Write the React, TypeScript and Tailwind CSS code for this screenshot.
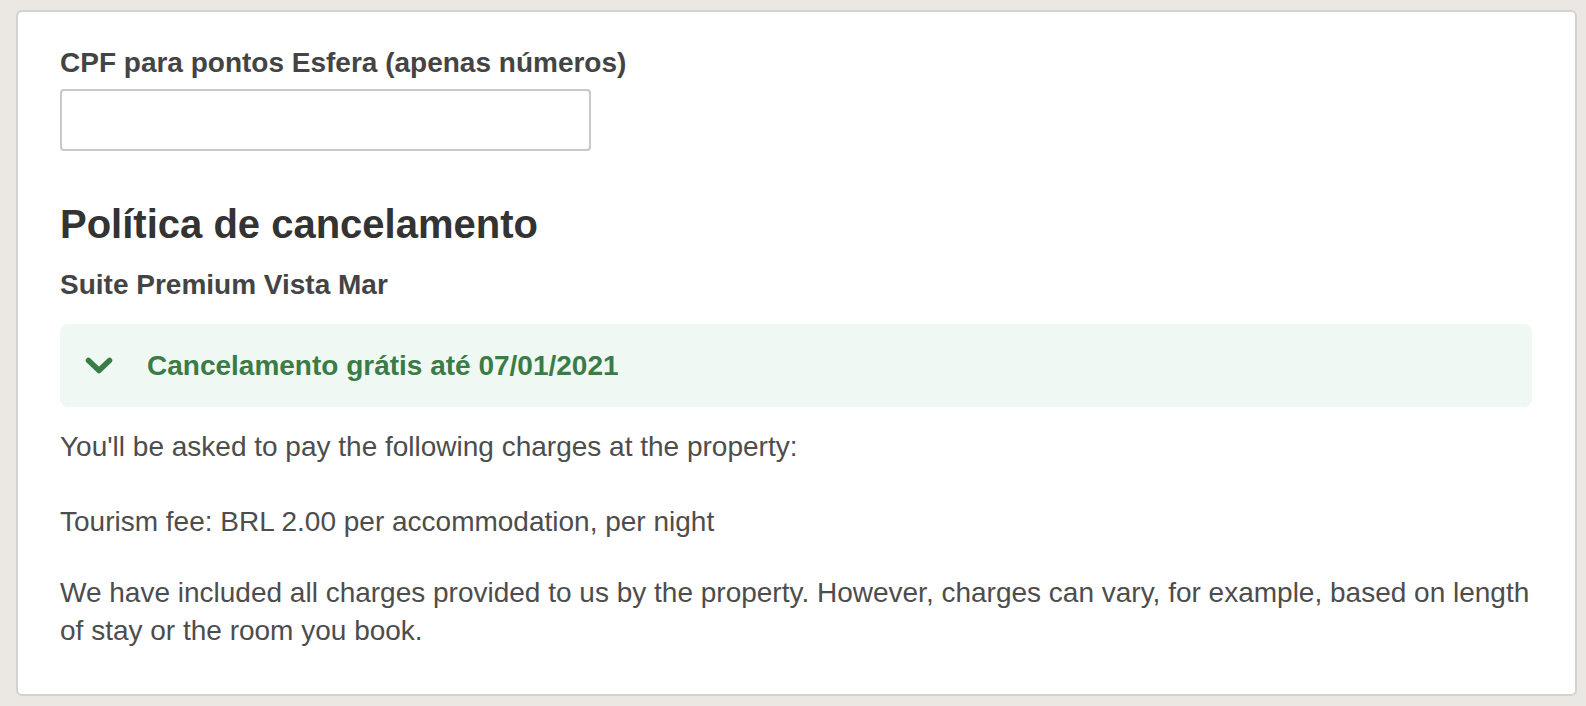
import { useState } from "react";

function ChevronDown() {
  return (
    <svg width="28" height="18" viewBox="0 0 28 18" fill="none" aria-hidden="true">
      <path
        d="M3.5 3.5 L14 13.5 L24.5 3.5"
        stroke="#3b7b46"
        strokeWidth="5.5"
        strokeLinecap="round"
        strokeLinejoin="round"
      />
    </svg>
  );
}

export default function App() {
  const [cpf, setCpf] = useState("");

  return (
    <div className="min-h-[706px] bg-[#ebe8e3] pt-[10px] pb-[11px] pl-[16px] pr-[9px] font-['Liberation_Sans',Arial,sans-serif]">
      <div className="rounded-[6px] border-2 border-[#d3d2cf] bg-white pt-[35px] pb-[45px] pl-[42px] pr-[43px]">
        <label className="block text-[28px] leading-[32px] font-bold text-[#444444]">
          CPF para pontos Esfera (apenas números)
        </label>
        <input
          type="text"
          inputMode="numeric"
          value={cpf}
          onChange={(e) => setCpf(e.target.value.replace(/\D/g, ""))}
          className="mt-[10px] block h-[62px] w-[531px] rounded-[4px] border-2 border-[#c9c9c9] px-3 text-[28px] text-[#444444] outline-none"
        />

        <h2 className="mt-[50px] text-[40px] leading-[46px] font-bold text-[#333333]">
          Política de cancelamento
        </h2>
        <p className="mt-[22px] text-[28px] leading-[32px] font-bold text-[#444444]">
          Suite Premium Vista Mar
        </p>

        <div className="mt-[23px] flex h-[83px] items-center gap-[34px] rounded-[8px] bg-[#f0f8f3] pl-[25px]">
          <ChevronDown />
          <span className="text-[28px] leading-[32px] font-bold text-[#3b7b46]">
            Cancelamento grátis até 07/01/2021
          </span>
        </div>

        <div className="mt-[21px] text-[28px] leading-[37.5px] text-[#4d4d4d]">
          <p>You'll be asked to pay the following charges at the property:</p>
          <p className="mt-[37px]">Tourism fee: BRL 2.00 per accommodation, per night</p>
          <p className="mt-[34px]">
            We have included all charges provided to us by the property. However, charges can vary, for
            example, based on length of stay or the room you book.
          </p>
        </div>
      </div>
    </div>
  );
}
